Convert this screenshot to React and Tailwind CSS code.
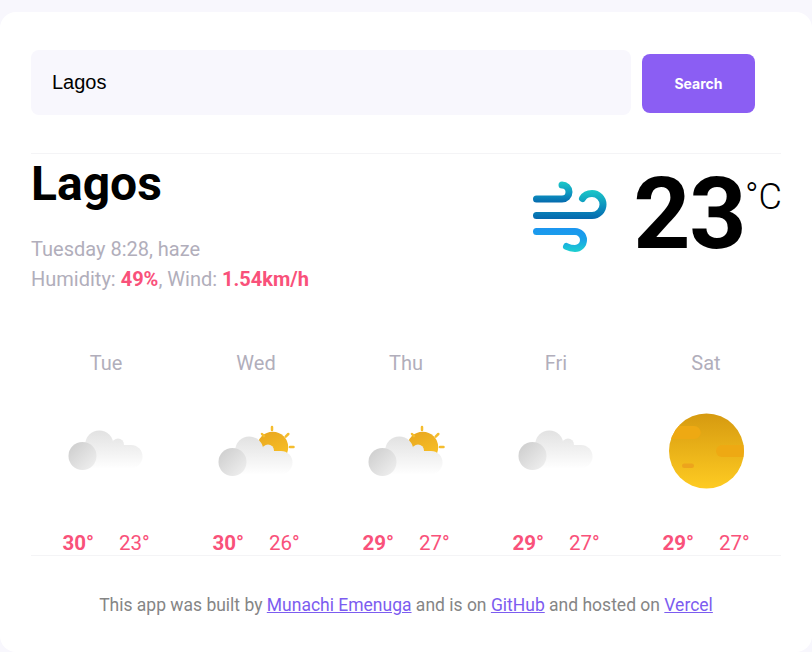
import React from "react";

function Cloud({ id, sun }) {
  const dy = sun ? 6 : 0;
  return (
    <svg width="100" height="100" viewBox="0 0 100 100">
      <defs>
        <linearGradient id={id + "a"} gradientUnits="userSpaceOnUse" x1="0" y1="30" x2="0" y2="68">
          <stop offset="0" stopColor="#e2e2e2" />
          <stop offset="1" stopColor="#ffffff" />
        </linearGradient>
        <linearGradient id={id + "b"} x1="0" y1="0" x2="1" y2="1">
          <stop offset="0" stopColor="#cbcbcb" />
          <stop offset="1" stopColor="#f2f2f2" />
        </linearGradient>
        <linearGradient id={id + "s"} x1="0.3" y1="0" x2="0.7" y2="1">
          <stop offset="0" stopColor="#e9a820" />
          <stop offset="1" stopColor="#fac326" />
        </linearGradient>
      </defs>
      {sun && (
        <g>
          <circle cx="66.7" cy="46.2" r="15.5" fill={`url(#${id}s)`} />
          <g stroke="#f5bd2e" strokeWidth="2.500" strokeLinecap="round">
            <path d="M66 26V29" />
            <path d="M56 33l2 2.200" />
            <path d="M82.300 33l-2.600 2.600" />
            <path d="M84 46h3.500" />
          </g>
        </g>
      )}
      <g transform={`translate(0 ${dy})`}>
        <circle cx="43.3" cy="43.500" r="14" fill={`url(#${id}a)`} />
        <circle cx="62" cy="43.500" r="6" fill={`url(#${id}a)`} />
        <path d="M26 44H75a11.500 11.500 0 0 1 0 23H26z" fill={`url(#${id}a)`} />
        <circle cx="26.5" cy="55" r="14" fill={`url(#${id}b)`} />
      </g>
    </svg>
  );
}

function Haze() {
  return (
    <svg width="100" height="100" viewBox="0 0 100 100">
      <defs>
        <linearGradient id="hz" x1="0.5" y1="0" x2="0.5" y2="1">
          <stop offset="0" stopColor="#d69a10" />
          <stop offset="1" stopColor="#fecb22" />
        </linearGradient>
        <clipPath id="hc">
          <circle cx="50.500" cy="50" r="37.500" />
        </clipPath>
      </defs>
      <circle cx="50.500" cy="50" r="37.500" fill="url(#hz)" />
      <g clipPath="url(#hc)" fill="#eea913">
        <rect x="0" y="25" width="44.700" height="13" rx="6.500" />
        <rect x="60" y="44" width="40" height="12" rx="6" />
        <rect x="26" y="62.500" width="12" height="4.500" rx="2.250" fill="#eda41c" />
      </g>
    </svg>
  );
}

function Wind() {
  return (
    <svg width="80" height="80" viewBox="530 176 80 80" fill="none">
      <defs>
        <linearGradient id="w1" gradientUnits="userSpaceOnUse" x1="0" y1="182" x2="0" y2="203">
          <stop offset="0" stopColor="#1cc8c8" />
          <stop offset="0.6" stopColor="#0c90bf" />
          <stop offset="1" stopColor="#0568ad" />
        </linearGradient>
        <linearGradient id="w3" gradientUnits="userSpaceOnUse" x1="0" y1="190" x2="0" y2="219">
          <stop offset="0" stopColor="#1cc8c8" />
          <stop offset="0.6" stopColor="#0b8dbd" />
          <stop offset="1" stopColor="#0568ad" />
        </linearGradient>
        <linearGradient id="w2" gradientUnits="userSpaceOnUse" x1="0" y1="228" x2="0" y2="252">
          <stop offset="0" stopColor="#1c96f0" />
          <stop offset="0.45" stopColor="#19a0e8" />
          <stop offset="1" stopColor="#1dd0cf" />
        </linearGradient>
      </defs>
      <path d="M536.500 199H562a7 7 0 0 0 0-14" stroke="url(#w1)" strokeWidth="7" strokeLinecap="round" />
      <path d="M536.500 215.500H592a11 11 0 0 0 0-22c-4 0-7.500 1.500-9.500 5" stroke="url(#w3)" strokeWidth="7" strokeLinecap="round" />
      <path d="M536.500 231.500H575a8.500 8.500 0 0 1 0 17c-3 0-6-.7-8.500-2" stroke="url(#w2)" strokeWidth="7" strokeLinecap="round" />
    </svg>
  );
}

const days = [
  { d: "Tue", hi: 30, lo: 23, icon: "cloud" },
  { d: "Wed", hi: 30, lo: 26, icon: "sun" },
  { d: "Thu", hi: 29, lo: 27, icon: "sun" },
  { d: "Fri", hi: 29, lo: 27, icon: "cloud" },
  { d: "Sat", hi: 29, lo: 27, icon: "haze" },
];

export default function App() {
  return (
    <div className="min-h-[652px] bg-[#f8f7fd] pt-3 font-['Roboto',sans-serif]">
      <div className="h-[640px] rounded-2xl bg-white pl-[31px] pr-[31px] pt-[38px]">
        <div className="flex items-center">
          <div className="flex h-[65px] w-[600px] items-center rounded-lg bg-[#f8f7fd] pb-[2px] pl-[21px] font-['Liberation_Sans',sans-serif] text-xl text-black">
            Lagos
          </div>
          <button className="ml-[11px] mt-[2px] h-[59px] w-[113px] rounded-lg bg-[#8b5ef3] font-['Inter',sans-serif] text-sm font-bold text-white">
            Search
          </button>
        </div>

        <div className="mt-[38px] flex justify-between border-t border-[#f4f4f6]">
          <div>
            <h1 className="mt-[2px] text-5xl leading-[56px] font-bold text-black">Lagos</h1>
            <div className="mt-[22px] text-xl leading-[30px] text-[#b1aebb]">
              <div>Tuesday 8:28, haze</div>
              <div>
                Humidity: <b className="font-bold text-[#f9517a]">49%</b>, Wind:{" "}
                <b className="font-bold text-[#f9517a]">1.54km/h</b>
              </div>
            </div>
          </div>
          <div className="-mr-px flex items-start">
            <div className="mt-[22px]">
              <Wind />
            </div>
            <div className="ml-[23px] mt-[1px] text-[100px] leading-[117px] font-bold tracking-[-1.5px] text-black">23</div>
            <div className="mt-[22px] text-4xl leading-[42px] font-light text-black">°C</div>
          </div>
        </div>

        <div className="mt-[54px] grid grid-cols-5 border-b border-[#f4f4f6]">
          {days.map((x, i) => (
            <div key={i} className="flex flex-col items-center">
              <div className="text-xl leading-[30px] text-[#b1aebb]">{x.d}</div>
              <div className="mt-[23px]">
                {x.icon === "haze" ? <Haze /> : <Cloud id={"c" + i} sun={x.icon === "sun"} />}
              </div>
              <div className="mt-[30px] flex gap-[25px] text-[20.5px] leading-[24px] text-[#f9517a]">
                <span className="font-bold">{x.hi}°</span>
                <span>{x.lo}°</span>
              </div>
            </div>
          ))}
        </div>

        <div className="mt-[36px] text-center text-[17.5px] leading-[27px] text-[#858585]">
          This app was built by <a href="#" className="text-[#7c5cf0] underline">Munachi Emenuga</a> and is on{" "}
          <a href="#" className="text-[#7c5cf0] underline">GitHub</a> and hosted on{" "}
          <a href="#" className="text-[#7c5cf0] underline">Vercel</a>
        </div>
      </div>
    </div>
  );
}
